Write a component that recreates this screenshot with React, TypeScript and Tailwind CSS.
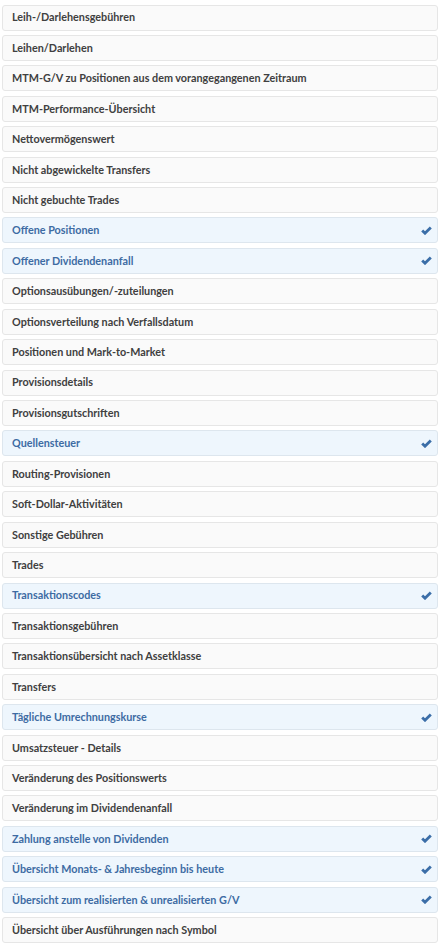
const items: { label: string; active?: boolean }[] = [
  { label: "Leih-/Darlehensgebühren" },
  { label: "Leihen/Darlehen" },
  { label: "MTM-G/V zu Positionen aus dem vorangegangenen Zeitraum" },
  { label: "MTM-Performance-Übersicht" },
  { label: "Nettovermögenswert" },
  { label: "Nicht abgewickelte Transfers" },
  { label: "Nicht gebuchte Trades" },
  { label: "Offene Positionen", active: true },
  { label: "Offener Dividendenanfall", active: true },
  { label: "Optionsausübungen/-zuteilungen" },
  { label: "Optionsverteilung nach Verfallsdatum" },
  { label: "Positionen und Mark-to-Market" },
  { label: "Provisionsdetails" },
  { label: "Provisionsgutschriften" },
  { label: "Quellensteuer", active: true },
  { label: "Routing-Provisionen" },
  { label: "Soft-Dollar-Aktivitäten" },
  { label: "Sonstige Gebühren" },
  { label: "Trades" },
  { label: "Transaktionscodes", active: true },
  { label: "Transaktionsgebühren" },
  { label: "Transaktionsübersicht nach Assetklasse" },
  { label: "Transfers" },
  { label: "Tägliche Umrechnungskurse", active: true },
  { label: "Umsatzsteuer - Details" },
  { label: "Veränderung des Positionswerts" },
  { label: "Veränderung im Dividendenanfall" },
  { label: "Zahlung anstelle von Dividenden", active: true },
  { label: "Übersicht Monats- & Jahresbeginn bis heute", active: true },
  { label: "Übersicht zum realisierten & unrealisierten G/V", active: true },
  { label: "Übersicht über Ausführungen nach Symbol" },
];

function Check() {
  return (
    <svg width="11" height="9" viewBox="0 0 11 9" className="shrink-0">
      <path d="M1.2 4.4 L4 7.2 L9.8 1.4" fill="none" stroke="#3b6ea8" strokeWidth="2.8" strokeLinejoin="miter" />
    </svg>
  );
}

export default function App() {
  return (
    <div className="w-[442px] h-[951px] bg-white pl-[2px] pr-[4px] pt-[4.5px] flex flex-col gap-[4.43px] font-['Lato',sans-serif]">
      {items.map((item, i) => (
        <div
          key={i}
          className={
            item.active
              ? "h-[26px] shrink-0 flex items-center justify-between pl-[9px] pr-[5px] rounded-[3px] border border-[#dde6ee] bg-[#eef6fd] text-[#3d6ba3] text-[10.8px] font-bold"
              : "h-[26px] shrink-0 flex items-center justify-between pl-[9px] pr-[5px] rounded-[3px] border border-[#e6e6e6] bg-[#fafafa] text-[#404040] text-[10.8px] font-bold"
          }
        >
          <span>{item.label}</span>
          {item.active && <Check />}
        </div>
      ))}
    </div>
  );
}
